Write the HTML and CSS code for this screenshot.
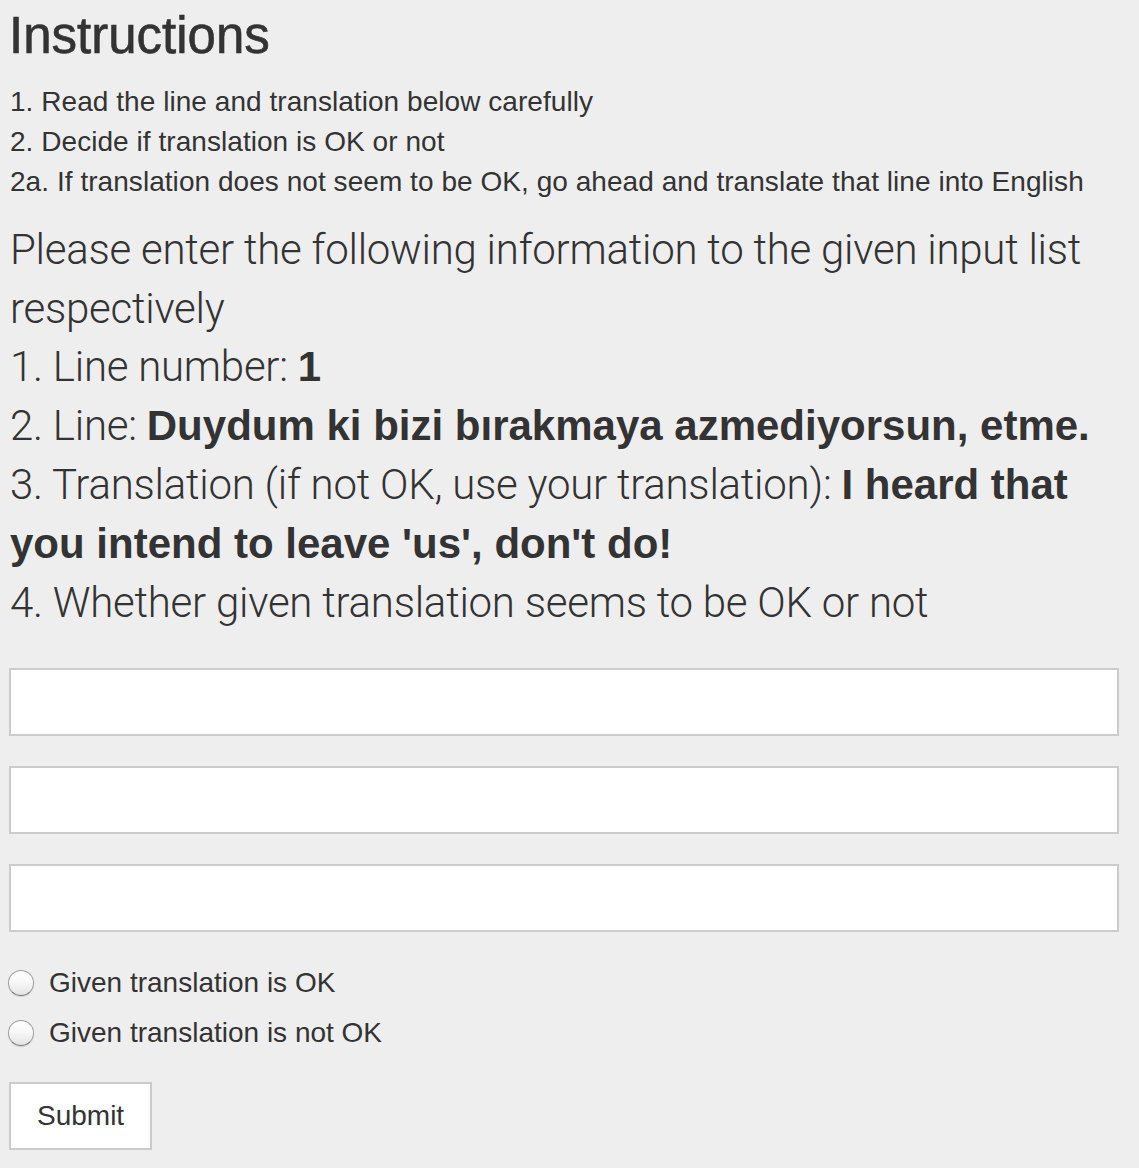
FILE: index.html
```html
<!DOCTYPE html>
<html>
<head>
<meta charset="utf-8">
<title>Instructions</title>
<link rel="stylesheet" href="styles.css">
</head>
<body>
<div class="page">
  <h3 class="title">Instructions</h3>
  <p class="steps">1. Read the line and translation below carefully<br>2. Decide if translation is OK or not<br>2a. If translation does not seem to be OK, go ahead and translate that line into English</p>
  <p class="lead">Please enter the following information to the given input list respectively<br>1. Line number: <strong>1</strong><br>2. Line: <strong>Duydum ki bizi bırakmaya azmediyorsun, etme.</strong><br>3. Translation (if not OK, use your translation): <strong>I heard that</strong> <strong>you intend to leave 'us', don't do!</strong><br>4. Whether given translation seems to be OK or not</p>
  <form class="form">
    <input class="field" type="text">
    <input class="field" type="text">
    <input class="field" type="text">
    <label class="radio"><input type="radio" name="ok" class="dot"><span>Given translation is OK</span></label>
    <label class="radio"><input type="radio" name="ok" class="dot"><span>Given translation is not OK</span></label>
    <button type="button" class="btn">Submit</button>
  </form>
</div>
</body>
</html>
```

FILE: styles.css
```css
html, body {
  margin: 0;
  padding: 0;
  background: #eeeeee;
}
body {
  font-family: "Liberation Sans", Arial, sans-serif;
  color: #333333;
  font-size: 28px;
  line-height: 40px;
}
.page {
  padding: 0 20px 0 9px;
}
.title {
  margin: 10px 0 19px;
  font-size: 51px;
  line-height: 52.8px;
  font-weight: 400;
  -webkit-text-stroke: 0.6px #333333;
}
.steps {
  margin: 0 0 19px;
  padding-left: 1px;
  letter-spacing: 0.05px;
}
.lead {
  margin: 0 0 35px;
  font-family: "Roboto", "Liberation Sans", sans-serif;
  font-weight: 300;
  font-size: 42px;
  line-height: 58.8px;
  padding-left: 1px;
  letter-spacing: -0.25px;
}
.lead strong {
  font-family: "Liberation Sans", Arial, sans-serif;
  font-weight: 700;
  letter-spacing: 0;
}
.form {
  display: flex;
  flex-direction: column;
  align-items: flex-start;
  padding-top: 1px;
}
.field {
  box-sizing: border-box;
  width: 1110px;
  height: 68px;
  margin: 0 0 30px;
  border: 2px solid #cccccc;
  border-radius: 0;
  background: #ffffff;
  padding: 12px 24px;
  font: inherit;
  outline: none;
}
.radio {
  display: flex;
  align-items: center;
  height: 40px;
  margin: 1px 0 9px;
}
.dot {
  appearance: none;
  -webkit-appearance: none;
  box-sizing: border-box;
  width: 26px;
  height: 26px;
  margin: 0 15px 0 -1px;
  border-radius: 50%;
  border: 1px solid #a0a0a0;
  border-bottom-color: #7a7a7a;
  background: linear-gradient(#ffffff 0%, #f8f8f8 45%, #e4e4e4 100%);
  box-shadow: 0 1px 1px rgba(0,0,0,0.12);
}
.radio span {
  line-height: 40px;
}
.btn {
  box-sizing: border-box;
  margin-top: 20px;
  height: 68px;
  padding: 0 26px;
  border: 2px solid #cccccc;
  border-radius: 0;
  background: #ffffff;
  color: #333333;
  font-family: "Liberation Sans", Arial, sans-serif;
  font-size: 28px;
  line-height: 40px;
}
```
